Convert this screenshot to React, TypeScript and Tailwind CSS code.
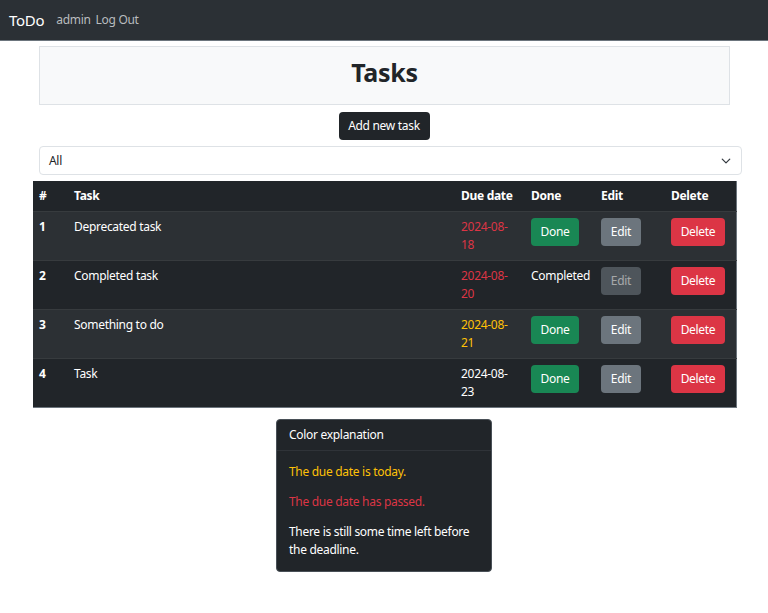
import React from "react";

type Task = {
  id: number;
  name: string;
  due: [string, string];
  dueColor: string;
  completed: boolean;
};

const tasks: Task[] = [
  { id: 1, name: "Deprecated task", due: ["2024-08-", "18"], dueColor: "text-[#dc3545]", completed: false },
  { id: 2, name: "Completed task", due: ["2024-08-", "20"], dueColor: "text-[#dc3545]", completed: true },
  { id: 3, name: "Something to do", due: ["2024-08-", "21"], dueColor: "text-[#ffc107]", completed: false },
  { id: 4, name: "Task", due: ["2024-08-", "23"], dueColor: "text-white", completed: false },
];

const btn =
  "inline-flex items-center justify-center whitespace-nowrap h-[28px] px-[9px] rounded-[4px] text-[12px] text-white";

const App: React.FC = () => {
  return (
    <div className="min-h-[613px] bg-white text-[12px] leading-[18px] tracking-[-0.3px] text-[#212529] font-['Segoe_UI','Noto_Sans',sans-serif]">
      {/* Navbar */}
      <nav className="h-[41px] bg-[#2b3035] border-b border-[#6c757d] flex items-center px-[9px]">
        <span className="text-[15px] text-white mr-[12px]">ToDo</span>
        <span className="text-[#b9bcbf] mr-[5px]">admin</span>
        <span className="text-[#b9bcbf]">Log Out</span>
      </nav>

      {/* Header */}
      <div className="ml-[39px] mt-[5px] w-[691px] h-[59px] bg-[#f8f9fa] border border-[#dee2e6] flex items-center justify-center pb-[7px]">
        <h1 className="text-[25px] leading-[32px] font-bold text-[#212529]">Tasks</h1>
      </div>

      <div className="flex justify-center mt-[7px]">
        <button className={`${btn} bg-[#212529] w-[91px]`}>Add new task</button>
      </div>

      {/* Filter */}
      <div className="ml-[39px] mt-[6px] w-[703px] h-[29px] border border-[#dee2e6] rounded-[4px] flex items-center justify-between pl-[9px] pr-[10px]">
        <span>All</span>
        <svg width="10" height="10" viewBox="0 0 16 16" fill="none" stroke="#343a40" strokeWidth="2" strokeLinecap="round" strokeLinejoin="round">
          <path d="M2 5l6 6 6-6" />
        </svg>
      </div>

      {/* Table */}
      <table className="ml-[33px] mt-[6px] w-[703px] table-fixed border-collapse text-white border-r border-[#6c757d]">
        <colgroup>
          <col className="w-[35px]" />
          <col className="w-[387px]" />
          <col className="w-[70px]" />
          <col className="w-[70px]" />
          <col className="w-[70px]" />
          <col className="w-[71px]" />
        </colgroup>
        <thead>
          <tr className="bg-[#212529] border-b border-[#373b3e]">
            {["#", "Task", "Due date", "Done", "Edit", "Delete"].map((h) => (
              <th key={h} className="text-left font-bold px-[6px] py-[6px]">
                {h}
              </th>
            ))}
          </tr>
        </thead>
        <tbody>
          {tasks.map((t, i) => (
            <tr
              key={t.id}
              className={`${i % 2 === 0 ? "bg-[#2c3034]" : "bg-[#212529]"} border-b ${
                i === tasks.length - 1 ? "border-[#6c757d]" : "border-[#373b3e]"
              } align-top`}
            >
              <th className="text-left font-bold px-[6px] py-[6px]">{t.id}</th>
              <td className="px-[6px] py-[6px]">{t.name}</td>
              <td className={`px-[6px] py-[6px] ${t.dueColor}`}>
                {t.due[0]}
                <br />
                {t.due[1]}
              </td>
              <td className="px-[6px] py-[6px]">
                {t.completed ? (
                  <span>Completed</span>
                ) : (
                  <button className={`${btn} bg-[#198754] w-[48px]`}>Done</button>
                )}
              </td>
              <td className="px-[6px] py-[6px]">
                <button className={`${btn} bg-[#6c757d] w-[40px] ${t.completed ? "opacity-60" : ""}`}>
                  Edit
                </button>
              </td>
              <td className="px-[6px] py-[6px]">
                <button className={`${btn} bg-[#dc3545] w-[54px]`}>Delete</button>
              </td>
            </tr>
          ))}
        </tbody>
      </table>

      {/* Legend */}
      <div className="mx-auto mt-[11px] w-[216px] bg-[#212529] border border-[#495057] rounded-[4px] text-white">
        <div className="px-[12px] py-[6px] border-b border-[#2f3338]">Color explanation</div>
        <div className="p-[12px]">
          <p className="text-[#ffc107] mb-[12px]">The due date is today.</p>
          <p className="text-[#dc3545] mb-[12px]">The due date has passed.</p>
          <p>There is still some time left before the deadline.</p>
        </div>
      </div>
    </div>
  );
};

export default App;
